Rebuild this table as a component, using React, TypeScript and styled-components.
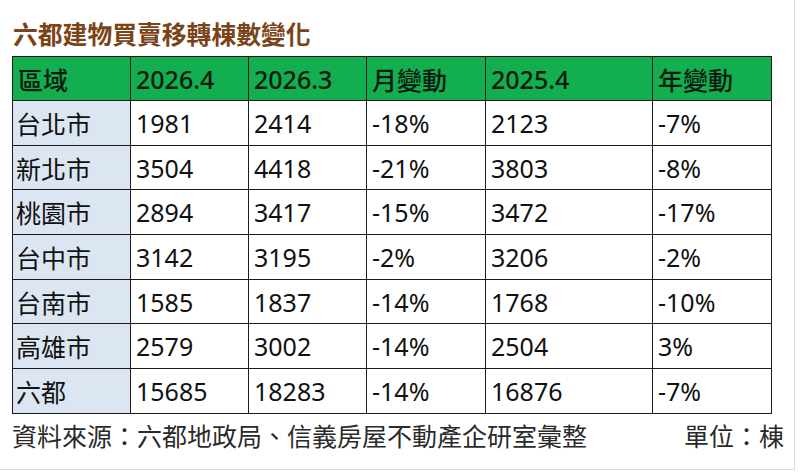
import React from "react";
import styled, { createGlobalStyle } from "styled-components";

const Global = createGlobalStyle`
  html, body { margin: 0; padding: 0; background: #ffffff; }
  body { font-family: "Noto Sans", "Noto Sans CJK TC", sans-serif; }
`;

const Frame = styled.div`
  width: 795px;
  height: 470px;
  box-sizing: border-box;
  border-right: 1px solid #dcdcdc;
  border-bottom: 1px solid #dcdcdc;
  padding: 16px 0 0 12px;
  display: flex;
  flex-direction: column;
  background: #fff;
`;

const Title = styled.h1`
  margin: 0 0 6px 1px;
  font-family: "Noto Sans CJK TC", sans-serif;
  font-size: 24.8px;
  line-height: 34px;
  font-weight: 700;
  color: #7b4318;
  letter-spacing: 0;
`;

const Table = styled.table`
  border-collapse: collapse;
  table-layout: fixed;
  width: 759px;
  font-family: "Noto Sans", "Noto Sans CJK TC", sans-serif;
`;

const HeadCell = styled.th<{ $w: number }>`
  width: ${(p) => p.$w}px;
  height: 44px;
  box-sizing: border-box;
  background: #12ae4f;
  border: 1px solid #1a1a1a;
  padding: 0 0 0 5px;
  text-align: left;
  font-size: 25px;
  font-weight: 500;
  color: #0b1a0e;
  vertical-align: middle;
`;

const Row = styled.tr`
  height: 44.7px;
`;

const Cell = styled.td<{ $first?: boolean }>`
  box-sizing: border-box;
  background: ${(p) => (p.$first ? "#dbe6f2" : "#ffffff")};
  border: 1px solid #1a1a1a;
  padding: 0 0 0 ${(p) => (p.$first ? 3 : 5)}px;
  font-size: 25px;
  font-weight: 400;
  color: #111;
  vertical-align: middle;
  white-space: nowrap;
`;

const Footer = styled.div`
  display: flex;
  justify-content: space-between;
  align-items: center;
  width: 772px;
  height: 42px;
  font-family: "Noto Sans CJK TC", sans-serif;
  font-size: 25px;
  color: #2a2a2a;
`;

const cols = [
  { label: "區域", w: 118 },
  { label: "2026.4", w: 118 },
  { label: "2026.3", w: 118 },
  { label: "月變動", w: 119 },
  { label: "2025.4", w: 167 },
  { label: "年變動", w: 119 },
];

const rows = [
  ["台北市", "1981", "2414", "-18%", "2123", "-7%"],
  ["新北市", "3504", "4418", "-21%", "3803", "-8%"],
  ["桃園市", "2894", "3417", "-15%", "3472", "-17%"],
  ["台中市", "3142", "3195", "-2%", "3206", "-2%"],
  ["台南市", "1585", "1837", "-14%", "1768", "-10%"],
  ["高雄市", "2579", "3002", "-14%", "2504", "3%"],
  ["六都", "15685", "18283", "-14%", "16876", "-7%"],
];

export default function App() {
  return (
    <>
      <Global />
      <Frame>
        <Title>六都建物買賣移轉棟數變化</Title>
        <Table>
          <thead>
            <tr>
              {cols.map((c) => (
                <HeadCell key={c.label} $w={c.w}>
                  {c.label}
                </HeadCell>
              ))}
            </tr>
          </thead>
          <tbody>
            {rows.map((r) => (
              <Row key={r[0]}>
                {r.map((v, i) => (
                  <Cell key={i} $first={i === 0}>
                    {v}
                  </Cell>
                ))}
              </Row>
            ))}
          </tbody>
        </Table>
        <Footer>
          <span>資料來源：六都地政局、信義房屋不動產企研室彙整</span>
          <span>單位：棟</span>
        </Footer>
      </Frame>
    </>
  );
}
